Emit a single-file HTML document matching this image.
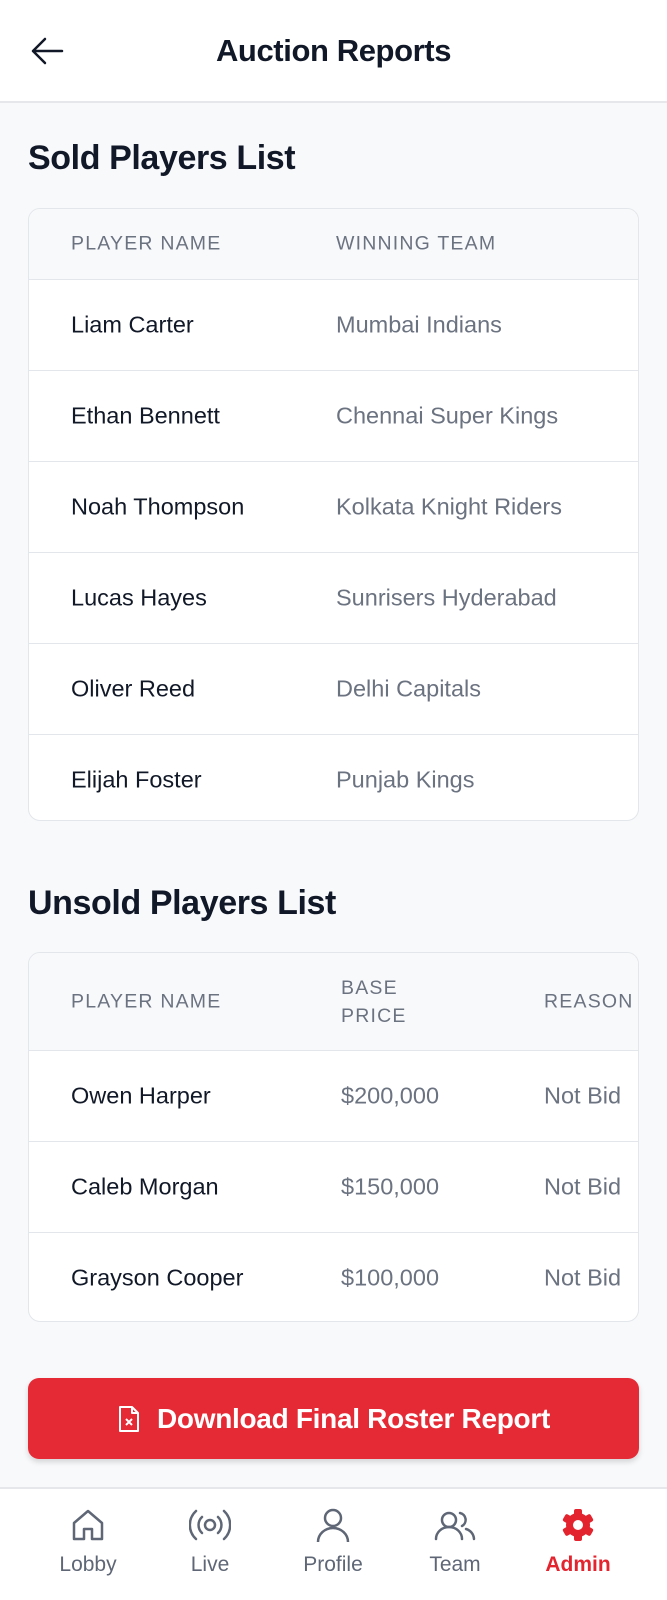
<!DOCTYPE html>
<html><head><meta charset="utf-8"><style>
*{box-sizing:border-box;margin:0;padding:0}
body{width:667px;height:1600px;background:#f8f9fb;font-family:"Liberation Sans",sans-serif;color:#111827;position:relative;overflow:hidden}
.hdr{position:absolute;left:0;top:0;width:667px;height:103px;background:#fff;border-bottom:2px solid #e5e7eb}
.hdr h1{position:absolute;left:0;right:0;top:33px;text-align:center;font-size:31px;font-weight:bold;letter-spacing:-0.4px}
.hdr svg{position:absolute;left:30px;top:36px}
h2{position:absolute;left:28px;font-size:34px;font-weight:bold;letter-spacing:-0.4px}
.card{position:absolute;left:28px;width:611px;background:#fff;border:1.5px solid #e3e6ea;border-radius:12px;overflow:hidden}
.row{position:relative;border-top:1.5px solid #e3e6ea;height:91px;font-size:23.5px}
.row:first-child{border-top:none}
.row span{position:absolute;top:50%;transform:translateY(-50%);white-space:nowrap}
.th{background:#f8f9fb;color:#6b7280;font-size:19.5px;letter-spacing:1.2px}
.n{color:#111827}.g{color:#6b7280}
.btn{position:absolute;left:28px;top:1378px;width:611px;height:81px;background:#e62a35;border-radius:11px;box-shadow:0 3px 6px rgba(0,0,0,.15);color:#fff;font-size:28px;font-weight:bold;display:flex;align-items:center;justify-content:center;letter-spacing:-0.3px}
.btn svg{margin-right:16px}
.nav{position:absolute;left:0;top:1487px;width:667px;height:113px;background:#fff;border-top:2px solid #e5e7eb}
.it{position:absolute;top:18px;width:120px;text-align:center;color:#5f6776;font-size:21px}
.it svg{display:block;margin:0 auto 10px}
</style></head><body>
<div class="hdr">
<svg width="34" height="30" viewBox="0 0 34 30"><path d="M32 15H3M15 3L3 15l12 12" fill="none" stroke="#111827" stroke-width="2.5" stroke-linecap="round" stroke-linejoin="round"/></svg>
<h1>Auction Reports</h1></div>

<h2 style="top:139px">Sold Players List</h2>
<div class="card" style="top:208px;height:613px">
<div class="row th" style="height:70px"><span style="left:42px">PLAYER NAME</span><span style="left:307px">WINNING TEAM</span></div>
<div class="row"><span class="n" style="left:42px">Liam Carter</span><span class="g" style="left:307px">Mumbai Indians</span></div>
<div class="row"><span class="n" style="left:42px">Ethan Bennett</span><span class="g" style="left:307px">Chennai Super Kings</span></div>
<div class="row"><span class="n" style="left:42px">Noah Thompson</span><span class="g" style="left:307px">Kolkata Knight Riders</span></div>
<div class="row"><span class="n" style="left:42px">Lucas Hayes</span><span class="g" style="left:307px">Sunrisers Hyderabad</span></div>
<div class="row"><span class="n" style="left:42px">Oliver Reed</span><span class="g" style="left:307px">Delhi Capitals</span></div>
<div class="row"><span class="n" style="left:42px">Elijah Foster</span><span class="g" style="left:307px">Punjab Kings</span></div>
</div>

<h2 style="top:884px">Unsold Players List</h2>
<div class="card" style="top:952px;height:370px">
<div class="row th" style="height:97px"><span style="left:42px">PLAYER NAME</span><span style="left:312px;line-height:28px">BASE<br>PRICE</span><span style="left:515px">REASON</span></div>
<div class="row"><span class="n" style="left:42px">Owen Harper</span><span class="g" style="left:312px">$200,000</span><span class="g" style="left:515px">Not Bid</span></div>
<div class="row"><span class="n" style="left:42px">Caleb Morgan</span><span class="g" style="left:312px">$150,000</span><span class="g" style="left:515px">Not Bid</span></div>
<div class="row"><span class="n" style="left:42px">Grayson Cooper</span><span class="g" style="left:312px">$100,000</span><span class="g" style="left:515px">Not Bid</span></div>
</div>

<div class="btn"><svg width="24" height="28" viewBox="0 0 24 28"><path d="M3 2h12l6 6v18H3z M15 2v6h6" fill="none" stroke="#fff" stroke-width="2" stroke-linejoin="round"/><path d="M9 14l6 6M15 14l-6 6" stroke="#fff" stroke-width="2"/></svg>Download Final Roster Report</div>

<div class="nav">
<div class="it" style="left:28px"><svg width="36" height="36" viewBox="0 0 36 36"><path d="M4 16L18 4l14 12v16H22V22h-8v10H4z" fill="none" stroke="#5f6776" stroke-width="2.5" stroke-linejoin="round"/></svg>Lobby</div>
<div class="it" style="left:150px"><svg width="42" height="36" viewBox="0 0 42 36"><circle cx="21" cy="18" r="5" fill="none" stroke="#5f6776" stroke-width="2.5"/><path d="M13 10a11 11 0 0 0 0 16M29 10a11 11 0 0 1 0 16M7 4a19 19 0 0 0 0 28M35 4a19 19 0 0 1 0 28" fill="none" stroke="#5f6776" stroke-width="2.5" stroke-linecap="round"/></svg>Live</div>
<div class="it" style="left:273px"><svg width="36" height="36" viewBox="0 0 36 36"><circle cx="18" cy="11" r="8" fill="none" stroke="#5f6776" stroke-width="2.5"/><path d="M3 35a15 14 0 0 1 30 0" fill="none" stroke="#5f6776" stroke-width="2.5"/></svg>Profile</div>
<div class="it" style="left:395px"><svg width="42" height="36" viewBox="0 0 42 36"><circle cx="15" cy="13" r="7" fill="none" stroke="#5f6776" stroke-width="2.5"/><path d="M2 32a13 12 0 0 1 26 0M26 6a7 7 0 0 1 2 13M32 22a11 11 0 0 1 8 10" fill="none" stroke="#5f6776" stroke-width="2.5" stroke-linecap="round"/></svg>Team</div>
<div class="it" style="left:518px;color:#e3242f;font-weight:bold"><svg width="36" height="36" viewBox="0 0 36 36"><g fill="#e3242f"><circle cx="18" cy="18" r="12"/><g id="t"><rect x="14" y="2" width="8" height="8" rx="2"/><rect x="14" y="26" width="8" height="8" rx="2"/></g><use href="#t" transform="rotate(60 18 18)"/><use href="#t" transform="rotate(120 18 18)"/></g><circle cx="18" cy="18" r="5" fill="#fff"/></svg>Admin</div>
</div>
</body></html>
